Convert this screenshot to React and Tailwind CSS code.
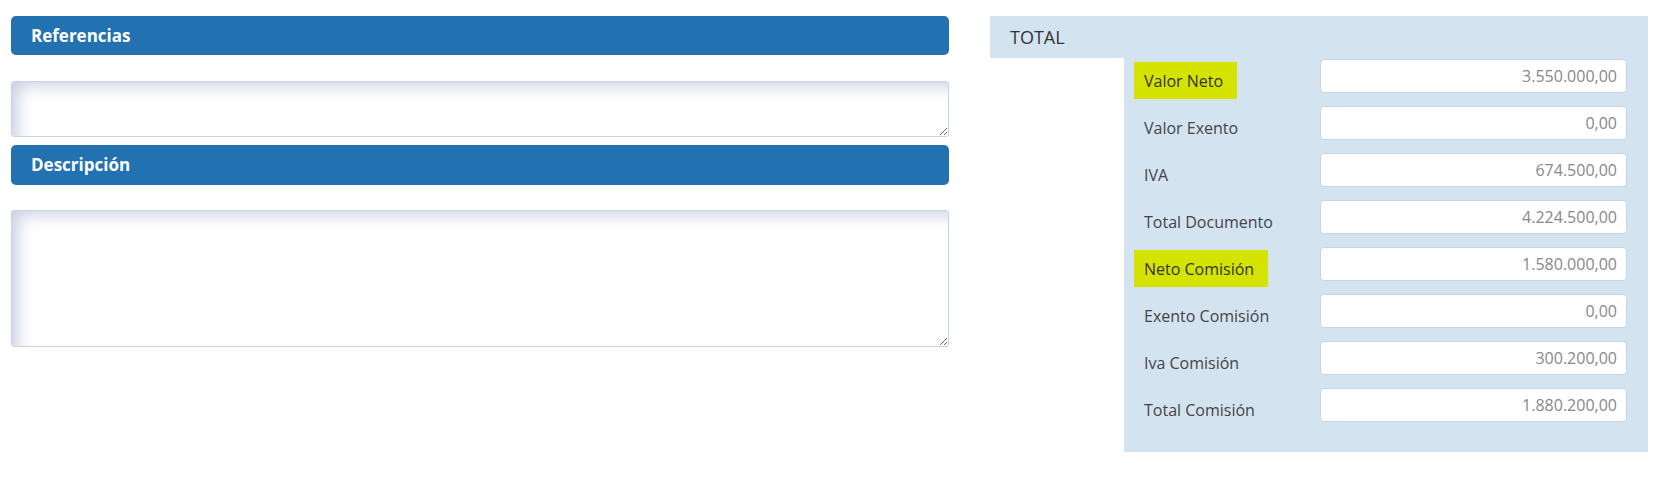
const rows = [
  { label: "Valor Neto", value: "3.550.000,00", mark: true },
  { label: "Valor Exento", value: "0,00" },
  { label: "IVA", value: "674.500,00" },
  { label: "Total Documento", value: "4.224.500,00" },
  { label: "Neto Comisión", value: "1.580.000,00", mark: true },
  { label: "Exento Comisión", value: "0,00" },
  { label: "Iva Comisión", value: "300.200,00" },
  { label: "Total Comisión", value: "1.880.200,00" },
]

const SectionBar = ({ title, className = "" }) => (
  <div className={`bg-[#2271b1] rounded-[5px] text-white font-bold text-[17px] pl-[20px] flex items-center ${className}`}>
    {title}
  </div>
)

const App = () => {
  return (
    <div
      className="min-h-screen bg-white flex pt-[16px] pl-[11px]"
      style={{ fontFamily: '"Open Sans", "Noto Sans", sans-serif' }}
    >
      {/* Left column */}
      <div className="w-[938px] flex flex-col">
        <SectionBar title="Referencias" className="h-[39px]" />
        <textarea className="mt-[26px] h-[56px] w-full rounded-[3px] border border-[#c9d3e6] bg-white shadow-[inset_14px_12px_16px_-8px_rgba(200,207,226,0.95)] outline-none" />
        <SectionBar title="Descripción" className="mt-[8px] h-[40px]" />
        <textarea className="mt-[25px] h-[137px] w-full rounded-[3px] border border-[#c9d3e6] bg-white shadow-[inset_14px_12px_16px_-8px_rgba(200,207,226,0.95)] outline-none" />
      </div>

      {/* Totals */}
      <div className="ml-[41px] w-[658px] flex flex-col">
        <div className="h-[42px] bg-[#d4e3f0] pl-[20px] flex items-center text-[18px] text-[#333]">
          TOTAL
        </div>
        <div className="ml-[134px] bg-[#d4e3f0] pl-[10px] pr-[21px] pt-[1px] pb-[30px] flex flex-col gap-[13px]">
          {rows.map((r) => (
            <div key={r.label} className="flex items-start h-[34px]">
              <div className="w-[186px]">
                <span
                  className={`inline-flex items-center h-[37px] mt-[3px] pl-[10px] pr-[14px] text-[16px] ${
                    r.mark ? "bg-[#d5e300] text-[#333]" : "text-[#444]"
                  }`}
                >
                  {r.label}
                </span>
              </div>
              <div className="flex-1 h-[34px] bg-white border border-[#c6d5e6] rounded-[4px] flex items-center justify-end pr-[9px] text-[16px] text-[#888]">
                {r.value}
              </div>
            </div>
          ))}
        </div>
      </div>
    </div>
  )
}

export default App
